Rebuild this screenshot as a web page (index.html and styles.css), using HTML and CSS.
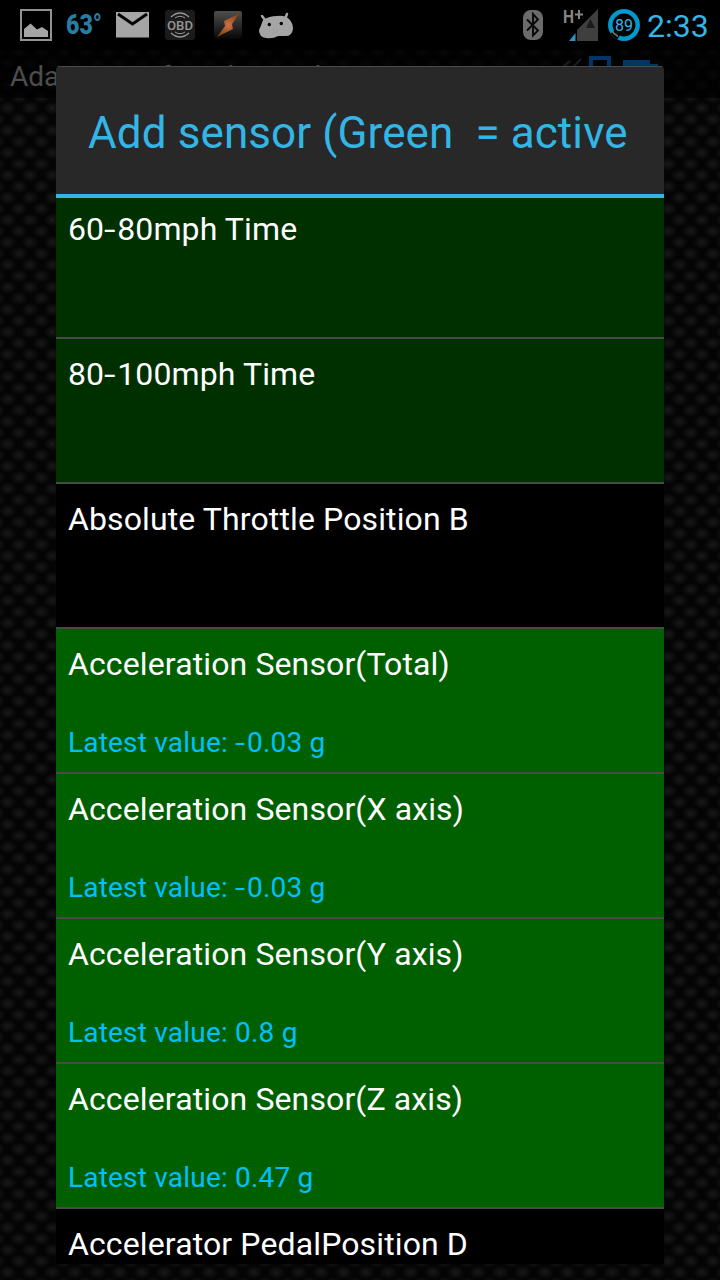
FILE: index.html
```html
<!DOCTYPE html>
<html lang="en">
<head>
  <meta charset="UTF-8" />
  <meta name="viewport" content="width=device-width, initial-scale=1.0"/>
  <title>Add sensor</title>
  <link rel="stylesheet" href="styles.css">
</head>
<body>
  <!-- Status bar -->
  <header class="status-bar">
    <div class="notifications">
      <svg class="icon-picture" width="32" height="32" viewBox="0 0 32 32">
        <rect x="1" y="1" width="30" height="30" fill="none" stroke="#929292" stroke-width="2"/>
        <path d="M4 28V20L10.500 14.500L17 20.500L22 18L28 22V28Z" fill="#a5a5a5"/>
      </svg>
      <svg class="temperature" width="40" height="40" viewBox="0 0 40 40">
        <text x="1" y="28.500" textLength="36" lengthAdjust="spacingAndGlyphs">63°</text>
      </svg>
      <svg class="icon-mail" width="33" height="26" viewBox="0 0 33 26">
        <path d="M0 0H33V25.500H0Z" fill="#a5a5a5"/>
        <path d="M2 2L16.500 12L31 2" fill="none" stroke="#000" stroke-width="3"/>
      </svg>
      <svg class="icon-obd" width="30" height="30" viewBox="0 0 30 30">
        <rect width="30" height="30" rx="3" fill="#1b1b1b"/>
        <g fill="none" stroke="#969696" stroke-width="1.500">
          <path d="M6 7Q15 -1 24 7M6 23Q15 31 24 23"/>
          <path d="M10 8Q15 4.500 20 8M10 22Q15 25.500 20 22" stroke-width="1"/>
        </g>
        <text x="15" y="19.500" text-anchor="middle" textLength="26" lengthAdjust="spacingAndGlyphs">OBD</text>
      </svg>
      <svg class="icon-bolt" width="28" height="28" viewBox="0 0 28 28">
        <defs>
          <linearGradient id="tile" x2="0" y2="1">
            <stop offset="0" stop-color="#4d4f4c"/>
            <stop offset="1" stop-color="#060606"/>
          </linearGradient>
          <radialGradient id="flame">
            <stop offset="0" stop-color="#cf7048"/>
            <stop offset="1" stop-color="#874512"/>
          </radialGradient>
        </defs>
        <rect width="28" height="28" rx="2" fill="url(#tile)"/>
        <path d="M26 2L10 10L11 15L3 26L19 18L18 13Z" fill="url(#flame)"/>
      </svg>
      <svg class="icon-android" width="34" height="27" viewBox="0 0 34 27">
        <path d="M3 4L6 8M28 2L26 7" stroke="#a5a5a5" stroke-width="2.500" stroke-linecap="round"/>
        <path d="M4 8Q10 4 18 4Q26 3 30 7Q34 11 34 17Q33 25 25 24Q21 24 19 24Q14 27 7 26Q0 25 0 18Q2 14 4 8Z" fill="#a5a5a5"/>
        <circle cx="10.300" cy="12.500" r="1.700"/>
        <circle cx="22.300" cy="11.500" r="1.700"/>
        <path d="M14 18h1M18 18h1M14 21h1M17 20h1" stroke="#858585"/>
      </svg>
    </div>
    <div class="system">
      <svg class="icon-bluetooth" width="20" height="30" viewBox="0 0 20 30">
        <rect width="20" height="30" rx="8" fill="#6b6b6b"/>
        <path d="M4 9.500L15 20.500L10 25.500V4L15 9.500L4 20.500" fill="none" stroke="#080808" stroke-width="1.900"/>
      </svg>
      <svg class="icon-signal" width="36" height="34" viewBox="0 0 36 34">
        <path d="M35 1V33H14V22Z" fill="#3f3f3f"/>
        <path d="M6 33L12.500 25V33Z" fill="#3391b8"/>
        <path d="M23 20L27.500 11L32 20Z" fill="#1b1b1b"/>
        <text x="0" y="15" textLength="11" lengthAdjust="spacingAndGlyphs">H</text>
        <path d="M12 6.500H20M16 2V11" stroke="#858585" stroke-width="2"/>
      </svg>
      <svg class="icon-battery" width="32" height="32" viewBox="0 0 32 32">
        <circle cx="16" cy="16" r="13.700" fill="none" stroke="#0099cc" stroke-width="4.500"/>
        <path d="M4.500 23Q7 26.500 10.500 28.500" fill="none" stroke="#000" stroke-width="5"/>
        <path d="M4 22Q6 25 10 27.500" fill="none" stroke="#777" stroke-width="1.500"/>
        <text x="16" y="22" text-anchor="middle">89</text>
      </svg>
      <span class="clock">2:33</span>
    </div>
  </header>

  <!-- Screen behind the dialog -->
  <div class="action-bar">
    <span>Adapter set for advance l</span>
    <svg class="action-icons" width="110" height="48" viewBox="0 0 110 48">
      <path d="M4 17L11 11M14 17L22 9" stroke="#1d1d1d" stroke-width="2"/>
      <path d="M32 28V8H50V28" fill="none" stroke="#003566" stroke-width="4"/>
      <path d="M64 10H91V14H99V28H64Z" fill="#003566"/>
    </svg>
  </div>

  <!-- Dialog -->
  <main class="dialog">
    <h1 class="dialog-title">Add sensor (Green&nbsp; = active</h1>
    <div class="list-view">
      <ul class="sensor-list">
        <li class="sensor available"><span class="name">60<span class="dash">-</span>80mph Time</span></li>
        <li class="sensor available"><span class="name">80<span class="dash">-</span>100mph Time</span></li>
        <li class="sensor"><span class="name">Absolute Throttle Position B</span></li>
        <li class="sensor active">
          <span class="name">Acceleration Sensor(Total)</span>
          <span class="value">Latest value: <span class="dash">-</span>0.03 g</span>
        </li>
        <li class="sensor active">
          <span class="name">Acceleration Sensor(X axis)</span>
          <span class="value">Latest value: <span class="dash">-</span>0.03 g</span>
        </li>
        <li class="sensor active">
          <span class="name">Acceleration Sensor(Y axis)</span>
          <span class="value">Latest value: 0.8 g</span>
        </li>
        <li class="sensor active">
          <span class="name">Acceleration Sensor(Z axis)</span>
          <span class="value">Latest value: 0.47 g</span>
        </li>
        <li class="sensor"><span class="name">Accelerator PedalPosition D</span></li>
      </ul>
    </div>
  </main>
</body>
</html>
```
FILE: styles.css
```css
* {
  margin: 0;
  padding: 0;
  box-sizing: border-box;
}

html, body {
  height: 100%;
  overflow: hidden;
}

/* carbon fibre weave */
body {
  background-color: #040404;
  background-image:
    radial-gradient(ellipse 9px 7px at 50% 50%, #171717 10%, transparent 100%),
    radial-gradient(ellipse 9px 7px at 50% 50%, #171717 10%, transparent 100%);
  background-size: 22.4px 22.4px;
  background-position: -3.5px 7.3px, 7.7px 18.5px;
  color: #ffffff;
  font-family: Roboto, sans-serif;
}

.status-bar {
  display: flex;
  justify-content: space-between;
  height: 50px;
  padding: 0 12px 0 20px;
  background: #000000;
}

.notifications,
.system {
  display: flex;
  align-items: center;
}

.temperature {
  margin: 0 11px 0 13px;
}

.temperature text {
  fill: #287da3;
  font-size: 27px;
  font-weight: 900;
}

.icon-obd {
  margin-left: 16px;
}

.icon-obd text {
  fill: #969696;
  font-size: 13px;
  font-weight: 500;
}

.icon-bolt {
  margin-left: 19px;
}

.icon-android {
  margin-left: 17px;
}

.icon-signal {
  margin-left: 20px;
}

.icon-signal text {
  fill: #858585;
  font-size: 18px;
  font-weight: bold;
}

.icon-battery {
  margin: 0 7px 0 9px;
}

.icon-battery text {
  fill: #33b5e5;
  font-size: 16px;
}

.clock {
  width: 61px;
  padding-top: 2px;
  color: #33b5e5;
  font-size: 32px;
  white-space: nowrap;
}

.action-bar {
  display: flex;
  justify-content: space-between;
  height: 48px;
  padding: 0 51px 0 10px;
  background: rgba(0, 0, 0, 0.7);
  color: #4d4d4d;
  font-size: 28px;
  line-height: 53px;
}

.dialog {
  position: absolute;
  top: 66px;
  left: 56px;
  display: flex;
  flex-direction: column;
  width: 608px;
  height: 1198px;
  border-radius: 4px 4px 0 0;
  background: #000000;
  overflow: hidden;
}

.dialog-title {
  height: 132px;
  padding-left: 32px;
  border-top: 1px solid #4b4b4b;
  border-bottom: 4px solid #33b5e5;
  background: #282828;
  color: #33b5e5;
  font-size: 44px;
  font-weight: normal;
  line-height: 133px;
  letter-spacing: 0.1px;
  white-space: nowrap;
}

.list-view {
  flex: 1;
  overflow: hidden;
}

/* list is scrolled by a few pixels */
.sensor-list {
  margin-top: -4px;
  list-style: none;
}

.sensor {
  display: flex;
  flex-direction: column;
  height: 145px;
  padding: 15px 12px 0;
  border-bottom: 2px solid #4a4a4a;
  background: #000000;
}

.available {
  background: #003000;
}

.active {
  background: #006000;
}

.name {
  height: 81px;
  font-size: 32px;
  line-height: 40px;
  letter-spacing: 0.12px;
}

.value {
  color: #00bfff;
  font-size: 28px;
  line-height: 36px;
  letter-spacing: 0.2px;
}

.dash {
  display: inline-block;
  margin-right: 4px;
  transform: scaleX(1.3);
  transform-origin: left;
}
```
